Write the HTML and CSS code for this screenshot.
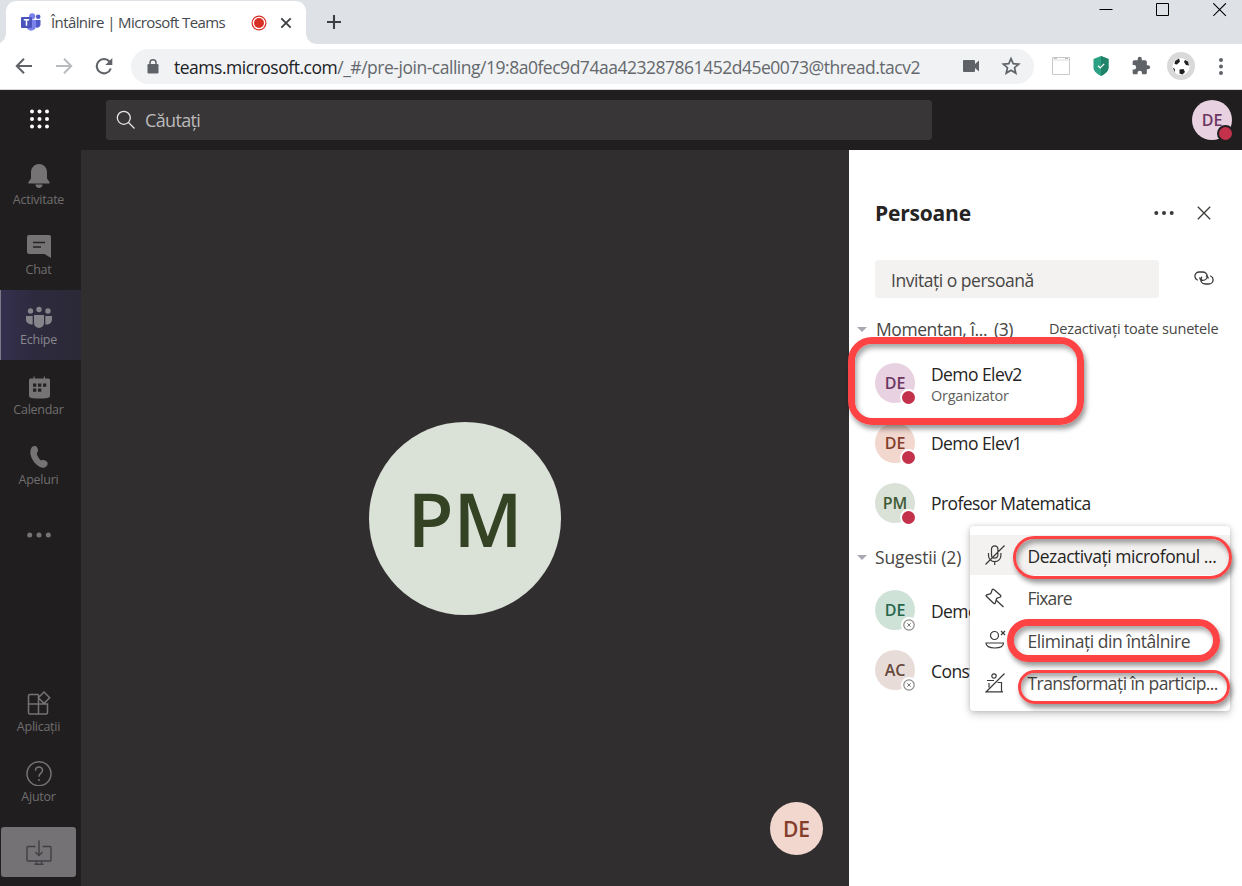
FILE: index.html
```html
<!DOCTYPE html>
<html lang="ro">
<head>
<meta charset="utf-8">
<title>Întâlnire | Microsoft Teams</title>
<link rel="stylesheet" href="styles.css">
</head>
<body>
<div class="window">
  <header class="tabs">
    <div class="tab">
      <svg class="teams-logo" width="20" height="19" viewBox="0 0 20 19"><circle cx="17.2" cy="3.8" r="2.3" fill="#5059c9"/><path d="M14 7h5.5v5a3.4 3.4 0 0 1-5.5 2z" fill="#5059c9"/><circle cx="11.2" cy="3.3" r="3.1" fill="#7b83eb"/><path d="M6 7h9v6.500a5 5 0 0 1-9 2z" fill="#7b83eb"/><rect y="4" width="11" height="11" rx="1" fill="#4b53bc"/><path d="M2.8 6.8h5.4M5.5 6.8v6" stroke="#fff" stroke-width="1.5"/></svg>
      <span class="tab-title">Întâlnire | Microsoft Teams</span>
      <svg class="record" width="16" height="16" viewBox="0 0 16 16"><circle cx="8" cy="8" r="6.9" fill="#fff" stroke="#d93025" stroke-width="1.2"/><circle cx="8" cy="8" r="5" fill="#d93025"/></svg>
      <svg class="tab-close" width="12" height="12" viewBox="0 0 12 12"><path d="M1.3 1.3l9.4 9.4M10.7 1.3L1.3 10.7" stroke="#3c4043" stroke-width="1.8"/></svg>
    </div>
    <svg class="new-tab" width="16" height="16" viewBox="0 0 16 16"><path d="M8 1v14M1 8h14" stroke="#3c4043" stroke-width="2.1"/></svg>
    <div class="window-controls">
      <svg width="14" height="14" viewBox="0 0 14 14"><path d="M.5 6.5h13" stroke="#000"/></svg>
      <svg width="14" height="14" viewBox="0 0 14 14"><path d="M.5.500h12v12h-12z" fill="none" stroke="#000"/></svg>
      <svg width="14" height="14" viewBox="0 0 14 14"><path d="M.3.300l12.600 12.600M12.900.300L.3 12.900" stroke="#000" stroke-width="1.1"/></svg>
    </div>
  </header>

  <div class="toolbar">
    <div class="nav-buttons">
      <svg width="18" height="18" viewBox="0 0 18 18" fill="none" stroke="#5f6368" stroke-width="2"><path d="M17 9H2M9 1.8L1.8 9 9 16.2"/></svg>
      <svg width="18" height="18" viewBox="0 0 18 18" fill="none" stroke="#b9bcbf" stroke-width="2"><path d="M1 9h15M9 1.8L16.2 9 9 16.2"/></svg>
      <svg width="18" height="18" viewBox="0 0 18 18"><path d="M15.8 11.5a7.2 7.2 0 1 1-1.3-7" fill="none" stroke="#5f6368" stroke-width="2.1"/><path d="M17.3 1v7h-7z" fill="#5f6368"/></svg>
    </div>
    <div class="address">
      <svg class="lock" width="12" height="15" viewBox="0 0 12 15"><rect x=".5" y="5" width="11" height="9.5" rx="1.3" fill="#5f6368"/><path d="M3 6V3.8a3 3 0 0 1 6 0V6" fill="none" stroke="#5f6368" stroke-width="1.5"/></svg>
      <span class="url"><span class="host">teams.microsoft.com</span>/_#/pre-join-calling/19:8a0fec9d74aa423287861452d45e0073@thread.tacv2</span>
      <svg class="camera" width="16" height="12" viewBox="0 0 16 12"><path d="M1 0h10q1 0 1 1v3l4-3.5v11L12 8v3q0 1-1 1H1q-1 0-1-1V1q0-1 1-1z" fill="#5f6368"/></svg>
      <svg class="star" width="20" height="20" viewBox="0 0 20 20"><path d="M10 2.6l2.2 5 5.5.5-4.2 3.6 1.3 5.4-4.8-2.9-4.8 2.9 1.3-5.4L2.3 8.1l5.500-.5z" fill="none" stroke="#5f6368" stroke-width="1.7"/></svg>
    </div>
    <div class="extensions">
      <svg width="20" height="20" viewBox="0 0 20 20"><path d="M1.5 1.5h17v17h-17z" fill="#fff" stroke="#c9c9c9"/><path d="M2 4h16" stroke="#ddd"/><path d="M3 2.5h3M14 2.5h3" stroke="#bbb"/></svg>
      <svg width="20" height="20" viewBox="0 0 20 20"><path d="M10 0l7.5 3v8.5c0 4-4 6.500-7.500 8.500-3.500-2-7.500-4.500-7.500-8.500V3z" fill="#2ba083"/><path d="M10 0l7.500 3v8.500c0 4-4 6.500-7.500 8.500z" fill="#1f8269"/><path d="M7 9.700l2.200 2.200 4-4" fill="none" stroke="#fff" stroke-width="1.300"/></svg>
      <svg width="20" height="20" viewBox="0 0 24 24"><path d="M20.500 11H19V7c0-1.100-.9-2-2-2h-4V3.500a2.500 2.500 0 0 0-5 0V5H4c-1.100 0-2 .9-2 2v3.800h1.500a2.700 2.700 0 0 1 0 5.400H2V20c0 1.100.9 2 2 2h3.800v-1.500a2.700 2.700 0 0 1 5.400 0V22H17c1.100 0 2-.9 2-2v-4h1.500a2.500 2.500 0 0 0 0-5z" fill="#5f6368"/></svg>
      <svg width="28" height="28" viewBox="0 0 28 28"><circle cx="14" cy="14" r="14" fill="#d9d9d9"/><circle cx="14" cy="14.500" r="8.600" fill="#fff"/><path d="M8 9l4-2.500 1 3-3 3-2.500-.5zM18 8l3 1.500 1 4-3-.5-2-3zM12.500 17.500l4-.5 1.500 3-2.500 2.500-3-1zM5.800 15.500l2 1.500v3.500z" fill="#202020"/></svg>
      <svg class="kebab" width="4" height="17" viewBox="0 0 4 17" fill="#5f6368"><circle cx="2" cy="2" r="2"/><circle cx="2" cy="8.500" r="2"/><circle cx="2" cy="15" r="2"/></svg>
    </div>
  </div>

  <div class="app-bar">
    <svg class="waffle" width="20" height="20" viewBox="0 0 20 20" fill="#fff"><circle cx="3" cy="2.500" r="2"/><circle cx="10.500" cy="2.500" r="2"/><circle cx="18" cy="2.500" r="2"/><circle cx="3" cy="10" r="2"/><circle cx="10.500" cy="10" r="2"/><circle cx="18" cy="10" r="2"/><circle cx="3" cy="17.500" r="2"/><circle cx="10.500" cy="17.500" r="2"/><circle cx="18" cy="17.500" r="2"/></svg>
    <div class="search">
      <svg width="20" height="20" viewBox="0 0 20 20" fill="none" stroke="#e8e8e8" stroke-width="1.300"><circle cx="7.800" cy="7.800" r="6.500"/><path d="M12.500 12.500l6 6"/></svg>
      <span>Căutați</span>
    </div>
    <div class="avatar pink me">DE<i class="busy"></i></div>
  </div>

  <div class="body">
    <nav class="rail">
      <div class="rail-item"><svg width="26" height="26" viewBox="0 0 26 26" fill="#757373"><path d="M13 1a8 8 0 0 1 8 8v6.500l2.500 3.500c.6 1 0 1.500-1 1.500h-19c-1 0-1.600-.5-1-1.500L5 15.500V9a8 8 0 0 1 8-8zM9.500 21.500h7c0 2-1.500 3.500-3.500 3.500s-3.500-1.500-3.500-3.500z"/></svg><span>Activitate</span></div>
      <div class="rail-item"><svg width="26" height="26" viewBox="0 0 26 26"><path d="M3 2h20q2 0 2 2v21L18.500 21H3q-2 0-2-2V4q0-2 2-2z" fill="#757373"/><path d="M7 9.500h12M7 14h8" stroke="#252324" stroke-width="1.300"/></svg><span>Chat</span></div>
      <div class="rail-item active"><svg width="26" height="26" viewBox="0 0 26 26" fill="#85848a"><circle cx="13" cy="6.500" r="2.700"/><circle cx="4.500" cy="8" r="2.700"/><circle cx="22" cy="8" r="2.700"/><path d="M8 12h10v8a5 5 0 0 1-10 0zM0 13h6.700v8.500C3 21.500 0 20 0 16.500zM19.300 13H26v3.500c0 3.500-3 5.500-6.700 5z"/></svg><span>Echipe</span></div>
      <div class="rail-item"><svg width="26" height="26" viewBox="0 0 26 26"><path d="M4.500 5.500h3v-2h1.200v2h9v-2h1.200v2h3.600q1.500 0 1.500 1.500v16q0 1.500-2.500 2-8 1-16 0Q3 24.500 3 23V7q0-1.500 1.500-1.500z" fill="#757373"/><path d="M12 10.500h3.300v3.300H12zM17 10.500h3.300v3.300H17zM7 15.500h3.300v3.300H7zM12 15.500h3.300v3.300H12zM7 10.500h3.300v3.300H7z" fill="#252324"/></svg><span>Calendar</span></div>
      <div class="rail-item"><svg width="26" height="26" viewBox="0 0 26 26"><path d="M6 4c1.500-1.500 4-1.200 4.800 0 1.500 2 1.700 4.500.2 6-.8 1 1.800 6 4 7.500 2-1 4.500-.5 6.500 2 1 2-1.500 5.500-5 5.300C8.500 23 1 11 6 4z" fill="#757373"/></svg><span>Apeluri</span></div>
      <div class="rail-more"><svg width="24" height="6" viewBox="0 0 24 6" fill="#757373"><circle cx="2.700" cy="3" r="2.500"/><circle cx="12" cy="3" r="2.500"/><circle cx="21.300" cy="3" r="2.500"/></svg></div>
      <div class="rail-bottom">
        <div class="rail-item"><svg width="26" height="26" viewBox="0 0 26 26" fill="none" stroke="#757373" stroke-width="1.500"><path d="M12.500 4.500H4q-1.500 0-1.500 1.500v16.500q0 1.500 1.500 1.500h16q1.500 0 1.500-1.500v-8.500h-19M12.500 4.500V24M18 2l5.700 5.700L18 13.400l-5.700-5.700z"/></svg><span>Aplicații</span></div>
        <div class="rail-item"><svg width="26" height="26" viewBox="0 0 26 26" fill="none" stroke="#757373" stroke-width="1.500"><circle cx="13" cy="13.700" r="12"/><path d="M9.500 10.700c0-5 7-4.700 7-.5 0 3-3.500 3-3.500 6.500"/><path d="M13 18.900v2"/></svg><span>Ajutor</span></div>
        <div class="download"><svg width="26" height="26" viewBox="0 0 26 26" fill="none" stroke="#403f44" stroke-width="1.400"><path d="M9.500 7.500H2q-1 0-1 1V21q0 1 1 1h22q1 0 1-1V8.500q0-1-1-1h-7.500M13 1.500v15M9.500 13l3.500 3.500 3.500-3.500M10.500 22v3.500M15.500 22v3.500M8.500 25.300h9"/></svg></div>
      </div>
    </nav>

    <main class="stage">
      <div class="speaker">PM</div>
      <div class="self-view">DE</div>
    </main>

    <aside class="people">
      <div class="people-head">
        <h1>Persoane</h1>
        <svg class="more" width="20" height="6" viewBox="0 0 20 6" fill="#3b3a39"><circle cx="2.300" cy="3" r="2"/><circle cx="10" cy="3" r="2"/><circle cx="17.700" cy="3" r="2"/></svg>
        <svg class="close" width="14" height="14" viewBox="0 0 14 14"><path d="M.8.800l12.400 12.400M13.200.800L.8 13.200" stroke="#3b3a39" stroke-width="1.300"/></svg>
      </div>
      <div class="invite">
        <div class="invite-field"><span>Invitați o persoană</span></div>
        <svg class="link" width="20" height="14" viewBox="0 0 20 14" fill="none" stroke="#3b3a39" stroke-width="1.300" stroke-linecap="round"><path d="M3.300 9C1.800 8.300.9 7 .9 5.300.9 2.800 2.800 1 5.300 1h3.200c2.700 0 4.700 1.800 4.700 4.200s-2 4.100-4.200 4.100c-1.700 0-2.900-.9-3.200-2.300"/><path d="M16.700 5c1.500.7 2.400 2 2.400 3.700 0 2.500-1.900 4.300-4.400 4.300h-3.200c-2.700 0-4.700-1.800-4.700-4.200s2-4.100 4.200-4.100c1.700 0 2.900.9 3.200 2.300" stroke-dasharray="24 5 30"/></svg>
      </div>
      <div class="section first"><i class="caret"></i><span class="section-name">Momentan, î...</span><span class="count">(3)</span><span class="mute-all">Dezactivați toate sunetele</span></div>
      <div class="person"><div class="avatar pink">DE<i class="busy"></i></div><div class="who with-role"><span class="name">Demo Elev2</span><span class="role">Organizator</span></div></div>
      <div class="person"><div class="avatar peach">DE<i class="busy"></i></div><div class="who"><span class="name">Demo Elev1</span></div></div>
      <div class="person"><div class="avatar sage">PM<i class="busy"></i></div><div class="who"><span class="name">Profesor Matematica</span></div></div>
      <div class="section second"><i class="caret"></i><span class="suggested">Sugestii (2)</span></div>
      <div class="person"><div class="avatar mint">DE<svg class="offline" width="16" height="16" viewBox="0 0 16 16"><circle cx="8" cy="8" r="8" fill="#fff"/><circle cx="8" cy="8" r="5.200" fill="none" stroke="#8a8886" stroke-width="1.200"/><path d="M6.300 6.300l3.400 3.400M9.700 6.300L6.300 9.700" stroke="#777"/></svg></div><div class="who low"><span class="name">Demo</span></div></div>
      <div class="person"><div class="avatar taupe">AC<svg class="offline" width="16" height="16" viewBox="0 0 16 16"><circle cx="8" cy="8" r="8" fill="#fff"/><circle cx="8" cy="8" r="5.200" fill="none" stroke="#8a8886" stroke-width="1.200"/><path d="M6.300 6.300l3.400 3.400M9.700 6.300L6.300 9.700" stroke="#777"/></svg></div><div class="who low"><span class="name">Const</span></div></div>
    </aside>
  </div>

  <div class="menu">
    <div class="menu-item hover"><svg width="22" height="22" viewBox="0 0 22 22" fill="none" stroke="#3b3a39" stroke-width="1.200"><path d="M7.500 11V5a3.200 3.200 0 0 1 6.400 0v6a3.200 3.200 0 0 1-6.400 0zM4.500 9v2.500a6.200 6.200 0 0 0 12.400 0V9M10.700 17.700V21M1.500 20.500L20.500 1.500"/></svg><span class="m1">Dezactivați microfonul ...</span></div>
    <div class="menu-item"><svg width="22" height="22" viewBox="0 0 22 22" fill="none" stroke="#3b3a39" stroke-width="1.300" stroke-linejoin="round"><path d="M8.300 2.500q.8-.8 1.600 0l6.600 5.800q.8 1-.2 1.700l-3.600 1.300-1.500 4.800q-.6 1.100-1.600.2L2.400 9.300q-.8-1 .4-1.500l4-1.200zM12.500 13.500l7 6.500"/></svg><span class="m2">Fixare</span></div>
    <div class="menu-item"><svg width="22" height="22" viewBox="0 0 22 22" fill="none" stroke="#3b3a39" stroke-width="1.200"><circle cx="10.500" cy="6.500" r="4"/><path d="M2 14h17.500c0 3-3 5-8.700 5S2 17 2 14zM17 2l4 4M21 2l-4 4"/></svg><span class="m3">Eliminați din întâlnire</span></div>
    <div class="menu-item"><svg width="22" height="22" viewBox="0 0 22 22" fill="none" stroke="#3b3a39" stroke-width="1.200"><path d="M1.500 20.500L20.500 1.500M3 8.500h7M5 11v4.500M13.500 10.500h4v9M1.500 19.800h17.500"/><circle cx="10" cy="4" r="2.200"/></svg><span class="m4">Transformați în particip...</span></div>
  </div>

  <div class="ring ring-organizer"></div>
  <div class="ring ring-mute"></div>
  <div class="ring ring-remove"></div>
  <div class="ring ring-attendee"></div>
</div>
</body>
</html>
```
FILE: styles.css
```css
* { box-sizing: border-box; }
body { margin: 0; font-family: "Open Sans", "Noto Sans", sans-serif; color: #252423; }
svg { display: block; flex: none; }
.window { position: relative; width: 1242px; height: 886px; overflow: hidden; display: flex; flex-direction: column; background: #fff; white-space: nowrap; }

/* Browser tab strip */
.tabs { height: 44px; flex: none; background: #dee1e6; display: flex; align-items: flex-start; }
.tab { position: relative; width: 300px; height: 43px; margin: 1px 0 0 6px; padding: 0 14px 0 15px; background: #fff; border-radius: 10px 10px 0 0; display: flex; align-items: center; }
.tab::before, .tab::after { content: ""; position: absolute; bottom: 0; width: 10px; height: 10px; }
.tab::before { left: -10px; background: radial-gradient(circle at 0 0, transparent 9.500px, #fff 10px); }
.tab::after { right: -10px; background: radial-gradient(circle at 100% 0, transparent 9.500px, #fff 10px); }
.tab-title { width: 200px; margin-left: 10px; padding-bottom: 1px; font-size: 15px; letter-spacing: -.61px; color: #45494d; }
.record { margin-left: 0; }
.tab-close { margin-left: 13px; }
.new-tab { margin: 14px 0 0 20px; }
.window-controls { margin: 3px 15px 0 auto; display: flex; gap: 43px; }

/* Browser toolbar */
.toolbar { height: 46px; flex: none; display: flex; align-items: center; padding-bottom: 1px; border-bottom: 1px solid #d6d8dc; }
.nav-buttons { width: 131px; padding-left: 15px; display: flex; gap: 22px; }
.address { width: 903px; height: 35px; border-radius: 18px; background: #f0f2f4; display: flex; align-items: center; padding-left: 16px; }
.url { width: 774px; margin-left: 15px; padding-top: 1px; font-size: 17.500px; letter-spacing: -.48px; color: #64686c; }
.host { color: #202124; }
.camera { margin-left: 15px; }
.star { margin-left: 22px; }
.extensions { display: flex; align-items: center; gap: 20px; padding-left: 17px; }
.extensions svg:nth-child(4) { margin-left: -4px; }
.kebab { margin-left: 4px; }

/* Teams header */
.app-bar { height: 60px; flex: none; background: #201e1f; display: flex; align-items: center; padding: 0 10px 0 29px; }
.waffle { margin-top: -3px; }
.search { width: 826px; height: 40px; margin-left: 57px; border-radius: 3px; background: #383637; display: flex; align-items: center; padding-left: 10px; gap: 9px; font-size: 18px; letter-spacing: -.65px; color: #bcbabb; }
.me { margin-left: auto; }

/* Shared avatars */
.avatar { position: relative; width: 40px; height: 40px; flex: none; border-radius: 50%; display: flex; align-items: center; justify-content: center; font-size: 16px; font-weight: 600; }
.pink { background: #e8d1e0; color: #6b3661; }
.peach { background: #f1d7ce; color: #843e2b; }
.sage { background: #dae1d7; color: #3f5b36; }
.mint { background: #cfe2d8; color: #25664c; }
.taupe { background: #e8dcd8; color: #66483c; }
.busy { position: absolute; left: 25px; top: 26px; width: 17px; height: 17px; border: 2.500px solid #fff; border-radius: 50%; background: #c4314b; }
.me .busy { top: 25px; border-color: #201e1f; }
.offline { position: absolute; left: 26px; top: 27px; }

/* Layout below the header */
.body { flex: 1; min-height: 0; display: flex; }
.rail { width: 81px; flex: none; background: #201e1f; display: flex; flex-direction: column; }
.rail-item { height: 70px; flex: none; padding: 13px 4px 0 0; display: flex; flex-direction: column; align-items: center; gap: 1px; color: #706e6f; font-size: 12.500px; letter-spacing: -.25px; line-height: 20px; }
.rail-item.active { color: #88878d; background: linear-gradient(90deg, #35304f 0, #2d2a3d 45%, #2b2937); box-shadow: inset 1px 0 #7a7986; }
.rail-more { height: 70px; display: flex; align-items: center; justify-content: center; padding-right: 4px; }
.rail-bottom { margin-top: auto; padding-bottom: 9px; }
.download { width: 75px; height: 50px; margin: 10px 0 0 1px; border-radius: 3px; background: #747274; display: flex; align-items: center; justify-content: center; }
.stage { position: relative; width: 768px; flex: none; background: #302e2f; display: flex; align-items: center; justify-content: center; }
.speaker { width: 192px; height: 193px; margin-top: 1px; padding-bottom: 2px; border-radius: 50%; background: #dae1d7; color: #354325; font-size: 75px; font-weight: 600; display: flex; align-items: center; justify-content: center; }
.self-view { position: absolute; right: 26px; bottom: 31px; width: 53px; height: 53px; border-radius: 50%; background: #f1d7ce; color: #843e2b; font-size: 21px; font-weight: 600; display: flex; align-items: center; justify-content: center; }

/* Participants panel */
.people { flex: 1; background: #fff; padding-left: 26px; }
.people-head { height: 40px; margin-top: 43px; display: flex; align-items: center; }
h1 { width: 279px; margin: 0; font-size: 21px; font-weight: 700; letter-spacing: -.2px; }
.close { margin-left: 23px; }
.invite { height: 38px; margin-top: 27px; display: flex; align-items: center; gap: 35px; }
.invite-field { width: 284px; height: 38px; padding: 1px 0 0 16px; border-radius: 3px; background: #f3f2f1; display: flex; align-items: center; color: #484644; font-size: 17.500px; letter-spacing: -.47px; }
.link { margin-bottom: 2px; }
.section { position: relative; height: 30px; display: flex; align-items: center; color: #484644; font-size: 17.500px; }
.first { margin-top: 16px; margin-bottom: 9px; }
.second { margin: 9px 0 8px; }
.caret { position: absolute; left: -18px; top: 13px; border: 5px solid transparent; border-top-color: #a9a8b2; border-bottom: 0; }
.section-name { width: 118px; padding-left: 1px; letter-spacing: -.42px; }
.count { width: 56px; padding-left: 1px; letter-spacing: -.5px; }
.mute-all { padding-bottom: 2px; font-size: 14.500px; letter-spacing: -.18px; }
.suggested { letter-spacing: -.15px; }
.person { height: 60px; display: flex; align-items: center; gap: 16px; }
.who { display: flex; flex-direction: column; line-height: 22px; }
.with-role { padding-top: 3px; }
.low { padding-top: 2px; }
.name { font-size: 17.500px; letter-spacing: -.58px; }
.role { font-size: 14.500px; letter-spacing: -.25px; color: #605e5c; }

/* Context menu over the list */
.menu { position: absolute; left: 970px; top: 526px; width: 260px; height: 185px; padding-top: 9px; background: #fff; border-radius: 4px; box-shadow: 0 3px 9px rgba(0,0,0,.22), 0 0 4px rgba(0,0,0,.12); display: flex; flex-direction: column; gap: 2.500px; }
.menu-item { height: 40px; flex: none; display: flex; align-items: center; padding-left: 14px; gap: 21.500px; font-size: 17.500px; color: #484644; }
.menu-item span { padding-top: 1px; letter-spacing: -.45px; }
.menu-item .m2 { letter-spacing: -.85px; }
.menu-item .m4 { letter-spacing: -.56px; }
.hover { background: #f3f2f1; color: #252423; }

/* Highlight rings */
.ring { position: absolute; border: 3px solid #fd4344; border-radius: 24px; box-shadow: 2px 4px 5px rgba(0,0,0,.4), inset 2px 4px 5px rgba(0,0,0,.35); }
.ring-organizer { left: 848px; top: 337px; width: 236px; height: 88px; border-width: 7px; }
.ring-mute { left: 1013px; top: 536px; width: 219px; height: 43px; }
.ring-remove { left: 1007px; top: 619px; width: 213px; height: 43px; border-width: 7px; }
.ring-attendee { left: 1018px; top: 670px; width: 212px; height: 34px; }
```
